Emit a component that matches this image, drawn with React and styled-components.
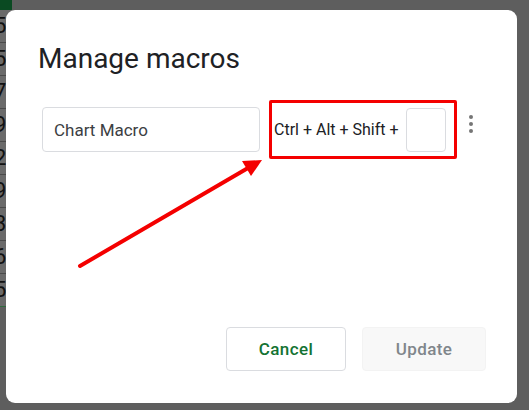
import styled, { createGlobalStyle } from 'styled-components';

const GlobalStyle = createGlobalStyle`
  html, body {
    margin: 0;
    padding: 0;
    width: 529px;
    height: 410px;
    overflow: hidden;
    background: #5e5e5e;
  }
`;

const Page = styled.div`
  position: relative;
  width: 529px;
  height: 410px;
  background: #5e5e5e;
  font-family: Roboto, "Liberation Sans", sans-serif;
`;

const Sheet = styled.div`
  display: flex;
  flex-direction: column;
  width: 60px;
`;

const TopBar = styled.div`
  height: 10px;
  display: flex;
`;

const GreenTab = styled.div`
  width: 12px;
  background: #0a4a22;
`;

const Cell = styled.div`
  height: 32px;
  border-bottom: 1px solid ${(p) => (p.$last ? '#2f6b3d' : '#4a4a4a')};
  background: #6a6a6a;
  color: #111;
  font-size: 22px;
  line-height: 32px;
  text-indent: -6px;
  overflow: hidden;
`;

const Dialog = styled.div`
  position: absolute;
  left: 6px;
  top: 10px;
  width: 511px;
  height: 393px;
  background: #fff;
  border-radius: 9px;
  box-sizing: border-box;
  padding: 33px 0 0 32px;
  display: flex;
  flex-direction: column;
`;

const Title = styled.h1`
  margin: 0;
  font-family: Roboto, "Liberation Sans", sans-serif;
  font-weight: 400;
  font-size: 28px;
  line-height: 32px;
  color: #202124;
`;

const Row = styled.div`
  display: flex;
  align-items: center;
  margin-top: 25px;
  margin-left: 4px;
`;

const NameBox = styled.div`
  width: 218px;
  height: 45px;
  box-sizing: border-box;
  border: 1px solid #dadce0;
  border-radius: 4px;
  display: flex;
  align-items: center;
  padding-left: 11px;
  font-size: 17px;
  color: #3c4043;
`;

const Highlight = styled.div`
  margin-left: 9px;
  width: 188px;
  height: 59px;
  box-sizing: border-box;
  border: 3px solid #f40000;
  border-radius: 2px;
  display: flex;
  align-items: center;
  padding-left: 2px;
`;

const Keys = styled.span`
  font-size: 16px;
  color: #202124;
  white-space: nowrap;
`;

const KeyBox = styled.div`
  margin-left: 7px;
  flex: none;
  width: 40px;
  height: 44px;
  box-sizing: border-box;
  border: 1px solid #dadce0;
  border-radius: 4px;
`;

const Kebab = styled.div`
  margin-left: 12px;
  display: flex;
  flex-direction: column;
  gap: 3px;
  margin-top: -11px;
`;

const Dot = styled.span`
  width: 4px;
  height: 4px;
  border-radius: 50%;
  background: #757575;
`;

const Spacer = styled.div`
  flex: 1;
`;

const Actions = styled.div`
  display: flex;
  justify-content: flex-end;
  gap: 16px;
  padding-right: 31px;
  margin-bottom: 32px;
`;

const Button = styled.button`
  width: ${(p) => p.$w}px;
  height: 44px;
  box-sizing: border-box;
  border-radius: 4px;
  border: 1px solid ${(p) => (p.$disabled ? '#f3f3f3' : '#dadce0')};
  background: ${(p) => (p.$disabled ? '#f8f8f8' : '#fff')};
  color: ${(p) => (p.$disabled ? '#80868b' : '#137333')};
  font-family: Roboto, "Liberation Sans", sans-serif;
  font-size: 17px;
  font-weight: 500;
  letter-spacing: 0.4px;
  padding: 0;
`;

const Arrow = styled.svg`
  position: absolute;
  left: 0;
  top: 0;
  pointer-events: none;
`;

const digits = ['5', '5', '7', '9', '2', '9', '3', '6', '5'];

export default function App() {
  return (
    <Page>
      <GlobalStyle />
      <Sheet>
        <TopBar>
          <GreenTab />
        </TopBar>
        {digits.map((d, i) => (
          <Cell key={i} $last={i === digits.length - 1}>
            {d}
          </Cell>
        ))}
      </Sheet>
      <Dialog>
        <Title>Manage macros</Title>
        <Row>
          <NameBox>Chart Macro</NameBox>
          <Highlight>
            <Keys>Ctrl + Alt + Shift +</Keys>
            <KeyBox />
          </Highlight>
          <Kebab>
            <Dot />
            <Dot />
            <Dot />
          </Kebab>
        </Row>
        <Spacer />
        <Actions>
          <Button $w={120}>Cancel</Button>
          <Button $w={124} $disabled>
            Update
          </Button>
        </Actions>
      </Dialog>
      <Arrow width="529" height="410" viewBox="0 0 529 410">
        <line x1="80" y1="266" x2="248" y2="168" stroke="#f40000" strokeWidth="4" strokeLinecap="round" />
        <polygon points="262,160 242,161 251,176" fill="#f40000" />
      </Arrow>
    </Page>
  );
}
